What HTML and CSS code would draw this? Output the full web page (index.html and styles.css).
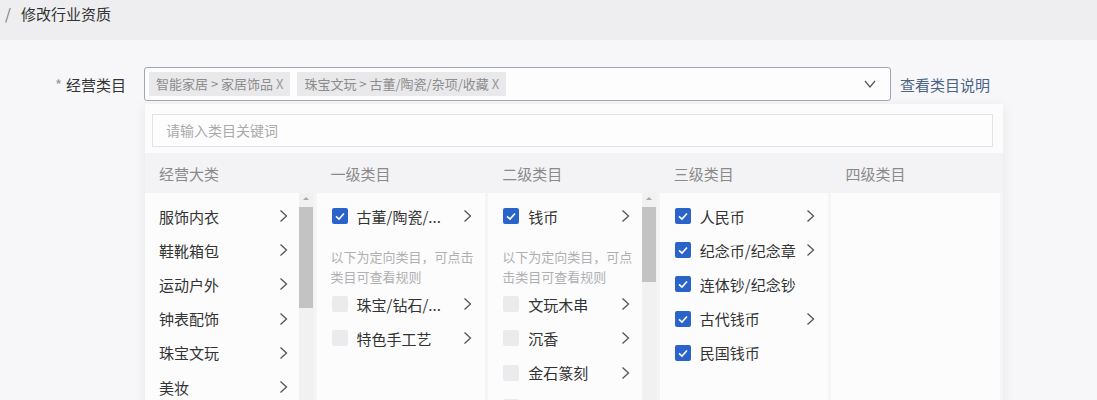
FILE: index.html
```html
<!DOCTYPE html>
<html lang="zh-CN">
<head>
<meta charset="utf-8">
<title>修改行业资质</title>
<link rel="stylesheet" href="styles.css">
</head>
<body>
<div class="topbar"><span class="sep">/</span><span class="crumb">修改行业资质</span></div>

<div class="form-row">
  <label class="label"><span class="req">*</span>经营类目</label>
  <div class="select">
    <span class="tag">智能家居 &gt; 家居饰品 <span class="x">X</span></span>
    <span class="tag">珠宝文玩 &gt; 古董/陶瓷/杂项/收藏 <span class="x">X</span></span>
    <svg class="arrow" width="12" height="8" viewBox="0 0 12 8"><polyline points="1,1 6,7 11,1" fill="none" stroke="#555" stroke-width="1.2"/></svg>
  </div>
  <a class="link">查看类目说明</a>
</div>

<div class="dropdown">
  <div class="search">请输入类目关键词</div>
  <div class="heads">
    <div class="head">经营大类</div>
    <div class="head">一级类目</div>
    <div class="head">二级类目</div>
    <div class="head">三级类目</div>
    <div class="head">四级类目</div>
  </div>
  <div class="cols">
    <div class="col">
      <div class="list l1">
        <div class="item"><span class="txt">服饰内衣</span><svg class="chev" width="9" height="14" viewBox="0 0 9 14"><polyline points="1.5,1.5 7.5,7 1.5,12.5" fill="none" stroke="#555" stroke-width="1.3"/></svg></div>
        <div class="item"><span class="txt">鞋靴箱包</span><svg class="chev" width="9" height="14" viewBox="0 0 9 14"><polyline points="1.5,1.5 7.5,7 1.5,12.5" fill="none" stroke="#555" stroke-width="1.3"/></svg></div>
        <div class="item"><span class="txt">运动户外</span><svg class="chev" width="9" height="14" viewBox="0 0 9 14"><polyline points="1.5,1.5 7.5,7 1.5,12.5" fill="none" stroke="#555" stroke-width="1.3"/></svg></div>
        <div class="item"><span class="txt">钟表配饰</span><svg class="chev" width="9" height="14" viewBox="0 0 9 14"><polyline points="1.5,1.5 7.5,7 1.5,12.5" fill="none" stroke="#555" stroke-width="1.3"/></svg></div>
        <div class="item"><span class="txt">珠宝文玩</span><svg class="chev" width="9" height="14" viewBox="0 0 9 14"><polyline points="1.5,1.5 7.5,7 1.5,12.5" fill="none" stroke="#555" stroke-width="1.3"/></svg></div>
        <div class="item"><span class="txt">美妆</span><svg class="chev" width="9" height="14" viewBox="0 0 9 14"><polyline points="1.5,1.5 7.5,7 1.5,12.5" fill="none" stroke="#555" stroke-width="1.3"/></svg></div>
      </div>
      <div class="scroll"><span class="up"></span><span class="thumb t1"></span></div>
    </div>

    <div class="col">
      <div class="list l2">
        <div class="item"><span class="cb on"><svg width="16" height="16" viewBox="0 0 16 16"><polyline points="4,8.3 7,11 12,5.5" fill="none" stroke="#fff" stroke-width="1.6"/></svg></span><span class="txt">古董/陶瓷/...</span><svg class="chev" width="9" height="14" viewBox="0 0 9 14"><polyline points="1.5,1.5 7.5,7 1.5,12.5" fill="none" stroke="#555" stroke-width="1.3"/></svg></div>
        <div class="note">以下为定向类目，可点击<br>类目可查看规则</div>
        <div class="item"><span class="cb off"></span><span class="txt">珠宝/钻石/...</span><svg class="chev" width="9" height="14" viewBox="0 0 9 14"><polyline points="1.5,1.5 7.5,7 1.5,12.5" fill="none" stroke="#555" stroke-width="1.3"/></svg></div>
        <div class="item"><span class="cb off"></span><span class="txt">特色手工艺</span><svg class="chev" width="9" height="14" viewBox="0 0 9 14"><polyline points="1.5,1.5 7.5,7 1.5,12.5" fill="none" stroke="#555" stroke-width="1.3"/></svg></div>
      </div>
    </div>

    <div class="col">
      <div class="list l3">
        <div class="item"><span class="cb on"><svg width="16" height="16" viewBox="0 0 16 16"><polyline points="4,8.3 7,11 12,5.5" fill="none" stroke="#fff" stroke-width="1.6"/></svg></span><span class="txt">钱币</span><svg class="chev" width="9" height="14" viewBox="0 0 9 14"><polyline points="1.5,1.5 7.5,7 1.5,12.5" fill="none" stroke="#555" stroke-width="1.3"/></svg></div>
        <div class="note">以下为定向类目，可点<br>击类目可查看规则</div>
        <div class="item"><span class="cb off"></span><span class="txt">文玩木串</span><svg class="chev" width="9" height="14" viewBox="0 0 9 14"><polyline points="1.5,1.5 7.5,7 1.5,12.5" fill="none" stroke="#555" stroke-width="1.3"/></svg></div>
        <div class="item"><span class="cb off"></span><span class="txt">沉香</span><svg class="chev" width="9" height="14" viewBox="0 0 9 14"><polyline points="1.5,1.5 7.5,7 1.5,12.5" fill="none" stroke="#555" stroke-width="1.3"/></svg></div>
        <div class="item"><span class="cb off"></span><span class="txt">金石篆刻</span><svg class="chev" width="9" height="14" viewBox="0 0 9 14"><polyline points="1.5,1.5 7.5,7 1.5,12.5" fill="none" stroke="#555" stroke-width="1.3"/></svg></div>
        <div class="item"><span class="cb off"></span><span class="txt"></span></div>
      </div>
      <div class="scroll"><span class="up"></span><span class="thumb t3"></span></div>
    </div>

    <div class="col">
      <div class="list l4">
        <div class="item"><span class="cb on"><svg width="16" height="16" viewBox="0 0 16 16"><polyline points="4,8.3 7,11 12,5.5" fill="none" stroke="#fff" stroke-width="1.6"/></svg></span><span class="txt">人民币</span><svg class="chev" width="9" height="14" viewBox="0 0 9 14"><polyline points="1.5,1.5 7.5,7 1.5,12.5" fill="none" stroke="#555" stroke-width="1.3"/></svg></div>
        <div class="item"><span class="cb on"><svg width="16" height="16" viewBox="0 0 16 16"><polyline points="4,8.3 7,11 12,5.5" fill="none" stroke="#fff" stroke-width="1.6"/></svg></span><span class="txt">纪念币/纪念章</span><svg class="chev" width="9" height="14" viewBox="0 0 9 14"><polyline points="1.5,1.5 7.5,7 1.5,12.5" fill="none" stroke="#555" stroke-width="1.3"/></svg></div>
        <div class="item"><span class="cb on"><svg width="16" height="16" viewBox="0 0 16 16"><polyline points="4,8.3 7,11 12,5.5" fill="none" stroke="#fff" stroke-width="1.6"/></svg></span><span class="txt">连体钞/纪念钞</span></div>
        <div class="item"><span class="cb on"><svg width="16" height="16" viewBox="0 0 16 16"><polyline points="4,8.3 7,11 12,5.5" fill="none" stroke="#fff" stroke-width="1.6"/></svg></span><span class="txt">古代钱币</span><svg class="chev" width="9" height="14" viewBox="0 0 9 14"><polyline points="1.5,1.5 7.5,7 1.5,12.5" fill="none" stroke="#555" stroke-width="1.3"/></svg></div>
        <div class="item"><span class="cb on"><svg width="16" height="16" viewBox="0 0 16 16"><polyline points="4,8.3 7,11 12,5.5" fill="none" stroke="#fff" stroke-width="1.6"/></svg></span><span class="txt">民国钱币</span></div>
      </div>
    </div>

    <div class="col">
      <div class="list l5"></div>
    </div>
  </div>
</div>
</body>
</html>
```

FILE: styles.css
```css
html, body {
  margin: 0;
  padding: 0;
}
body {
  width: 1097px;
  height: 400px;
  overflow: hidden;
  background: #f7f7f9;
  font-family: "Noto Sans CJK SC", "Noto Sans", sans-serif;
  color: #333;
}
.topbar {
  height: 36px;
  padding: 4px 0 0 5px;
  background: #eeeef0;
  font-size: 15px;
  line-height: 20px;
  display: flex;
}
.sep {
  color: #777;
  margin-right: 10px;
}
.crumb {
  color: #333;
}
.form-row {
  display: flex;
  align-items: center;
  margin-top: 27px;
  height: 34px;
}
.label {
  width: 126px;
  text-align: right;
  font-size: 15px;
  color: #333;
}
.req {
  color: #9a9a9a;
  margin-right: 4px;
}
.select {
  margin-left: 18px;
  width: 747px;
  height: 34px;
  box-sizing: border-box;
  border: 1px solid #9ea6b6;
  border-radius: 3px;
  background: #fdfdfe;
  display: flex;
  align-items: center;
  padding: 0 14px 0 4px;
  gap: 7px;
}
.tag {
  height: 24px;
  line-height: 24px;
  background: #e9e9eb;
  color: #8c8c8c;
  font-size: 13px;
  padding: 0 7px;
  white-space: nowrap;
}
.x {
  color: #999;
}
.arrow {
  margin-left: auto;
}
.link {
  margin-left: 9px;
  font-size: 15px;
  color: #4a6585;
}
.dropdown {
  margin-left: 145px;
  margin-top: 3px;
  width: 858px;
  height: 300px;
  background: #fcfcfd;
  box-shadow: 0 2px 12px rgba(0, 0, 0, 0.07);
  padding-top: 10px;
}
.search {
  margin: 0 10px 0 7px;
  height: 33px;
  box-sizing: border-box;
  border: 1px solid #e3e3e5;
  background: #fdfdfe;
  padding-left: 13px;
  font-size: 14px;
  line-height: 31px;
  color: #aaa;
}
.heads {
  margin-top: 6px;
  height: 40px;
  background: #f3f3f5;
  display: grid;
  grid-template-columns: repeat(5, 1fr);
}
.head {
  padding: 11px 0 0 14px;
  font-size: 15px;
  line-height: 20px;
  color: #8a8a8a;
}
.cols {
  display: grid;
  grid-template-columns: repeat(5, 1fr);
  height: 208px;
  background: #f5f5f7;
}
.col {
  display: flex;
  padding-right: 3px;
  min-width: 0;
  overflow: hidden;
}
.list {
  flex: 1;
  background: #fcfcfd;
  padding: 6px 13px 0 15px;
  min-width: 0;
}
.l1 {
  padding-left: 14px;
  padding-right: 11px;
}
.l3 {
  padding-right: 12px;
}
.item {
  height: 34.2px;
  display: flex;
  align-items: center;
  font-size: 15px;
  color: #333;
  white-space: nowrap;
}
.txt {
  flex: 1;
}
.chev {
  flex: none;
}
.cb {
  width: 16px;
  height: 16px;
  border-radius: 2px;
  margin-right: 9px;
  flex: none;
  display: block;
}
.cb svg {
  display: block;
}
.cb.on {
  background: #2a63c9;
}
.cb.off {
  background: #ebebed;
}
.note {
  padding-top: 14px;
  font-size: 13px;
  line-height: 20px;
  color: #b0b0b2;
  white-space: nowrap;
  margin-left: -1px;
}
.scroll {
  width: 15px;
  flex: none;
  background: #f1f1f2;
  display: flex;
  flex-direction: column;
  align-items: center;
}
.up {
  margin-top: 4px;
  width: 0;
  height: 0;
  border-left: 3px solid transparent;
  border-right: 3px solid transparent;
  border-bottom: 3px solid #a8a8a8;
}
.thumb {
  margin-top: 7px;
  width: 14px;
  background: #c3c3c4;
}
.t1 {
  height: 101px;
}
.t3 {
  height: 75px;
}
```
